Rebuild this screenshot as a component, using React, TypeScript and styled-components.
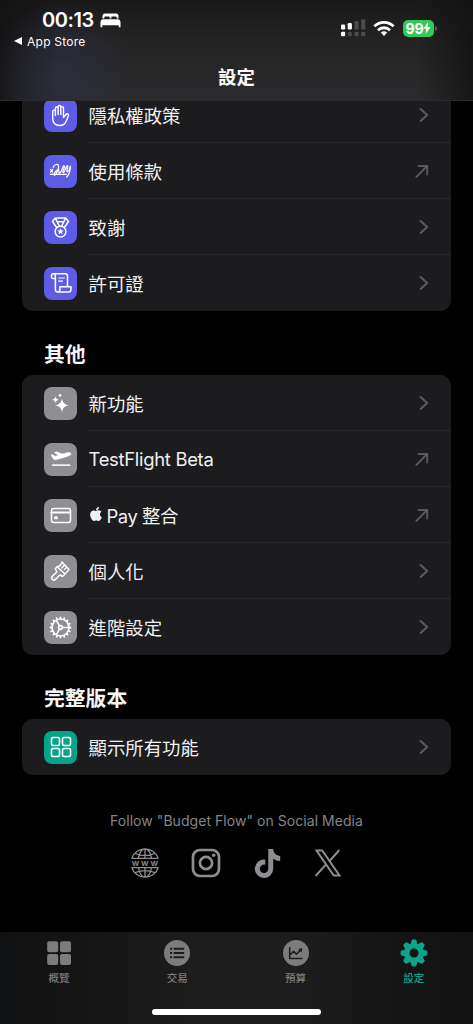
import React from "react";
import styled, { createGlobalStyle } from "styled-components";
import { FaApple, FaTiktok } from "react-icons/fa";

const GlobalStyle = createGlobalStyle`
  * { box-sizing: border-box; }
  body {
    margin: 0;
    background: #000;
    font-family: Inter, "Noto Sans CJK TC", sans-serif;
    color: #f0f0f1;
  }
  svg { display: block; flex: none; }
`;

const Screen = styled.div`
  display: flex;
  flex-direction: column;
  width: 473px;
  height: 1024px;
  overflow: hidden;
  background: #000;
`;

const Header = styled.header`
  display: flex;
  flex-direction: column;
  height: 101px;
  flex: none;
  border-bottom: 1px solid #29292b;
  background:
    radial-gradient(ellipse 70px 75px at 62px 75px, rgba(50, 50, 82, 0.5), rgba(50, 50, 82, 0)),
    linear-gradient(90deg, rgba(16, 16, 17, 0.75) 0, rgba(16, 16, 17, 0) 60px, rgba(16, 16, 17, 0) 415px, rgba(16, 16, 17, 0.75) 473px),
    linear-gradient(180deg, #191919 0, #232324 40px, #2b2b2d 100px);
`;

const StatusBar = styled.div`
  display: flex;
  justify-content: space-between;
  height: 54px;
  padding: 8px 36px 0 14px;
`;

const Clock = styled.div`
  display: flex;
  align-items: center;
  gap: 6px;
  height: 24px;
  padding-left: 28px;
  font-size: 20px;
  font-weight: 600;
  letter-spacing: -0.4px;
  color: #fff;
`;

const BackLink = styled.div`
  display: flex;
  align-items: center;
  gap: 4px;
  height: 18px;
  font-size: 12px;
  letter-spacing: 0.25px;
  color: #fff;
`;

const Indicators = styled.div`
  display: flex;
  align-items: center;
  height: 40px;
`;

const Wifi = styled.svg`
  margin: 0 8px 0 7px;
`;

const Battery = styled.div`
  display: flex;
  align-items: center;
  justify-content: center;
  width: 31px;
  height: 17px;
  border-radius: 5px;
  background: #34c759;
  color: #fff;
  font-size: 14px;
  font-weight: 700;
  letter-spacing: -0.2px;
`;

const BatteryCap = styled.span`
  width: 2px;
  height: 5px;
  margin-left: 1px;
  border-radius: 0 2px 2px 0;
  background: #58585a;
`;

const Title = styled.h1`
  margin: 9px 0 0;
  text-align: center;
  font-size: 18.4px;
  line-height: 28px;
  font-weight: 600;
  color: #fff;
`;

const Content = styled.main`
  flex: 1;
  min-height: 0;
  overflow: hidden;
  padding: 0 22px;
`;

const Card = styled.section<{ $scrolled?: boolean }>`
  margin-top: ${(p) => (p.$scrolled ? "-14px" : "0")};
  border-radius: 11px;
  overflow: hidden;
  background: #1c1c1e;
`;

const Row = styled.div`
  display: flex;
  align-items: center;
  height: 56px;
  padding-left: 22px;
`;

const Tile = styled.div<{ $color: string }>`
  display: flex;
  align-items: center;
  justify-content: center;
  flex: none;
  width: 33px;
  height: 33px;
  border-radius: 8px;
  background: ${(p) => p.$color};
  color: #fff;
`;

const RowBody = styled.div<{ $line: boolean }>`
  display: flex;
  align-items: center;
  justify-content: space-between;
  flex: 1;
  height: 56px;
  margin-left: 11px;
  padding: 1px 21px 0 0.5px;
  border-bottom: 1px solid ${(p) => (p.$line ? "#29292b" : "transparent")};
  font-size: 18.4px;
`;

const Label = styled.span<{ $tracking?: number }>`
  display: flex;
  align-items: center;
  gap: 3px;
  white-space: pre;
  letter-spacing: ${(p) => p.$tracking ?? 0}px;
`;

const AppleMark = styled(FaApple)`
  margin: -2px 0 0 -1px;
`;

const SectionTitle = styled.h2`
  display: flex;
  align-items: center;
  height: 64px;
  margin: 0;
  padding: 23px 0 0 22px;
  font-size: 20.8px;
  line-height: 26px;
  font-weight: 600;
  color: #f6f6f7;
`;

const Follow = styled.p`
  margin: 35px 0 0;
  text-align: center;
  font-size: 14px;
  line-height: 22px;
  letter-spacing: 0.05px;
  color: #858589;
`;

const Socials = styled.div`
  display: flex;
  justify-content: center;
  gap: 31px;
  margin-top: 16px;
  color: #8e8e92;
`;

const SocialLink = styled.span`
  display: flex;
  align-items: center;
  justify-content: center;
  width: 30px;
  height: 30px;
`;

const BottomBar = styled.footer`
  height: 92px;
  flex: none;
  background: linear-gradient(90deg, #101112 0, #151515 100px, #1d1d1d 190px, #1d1d1d 300px, #151515 380px, #121212 473px);
`;

const Tabs = styled.nav`
  display: grid;
  grid-template-columns: repeat(4, 1fr);
  height: 77px;
  padding-top: 7px;
`;

const Tab = styled.div<{ $active?: boolean }>`
  display: flex;
  flex-direction: column;
  align-items: center;
  gap: 4px;
  font-size: 10.6px;
  line-height: 16px;
  font-weight: 500;
  color: ${(p) => (p.$active ? "#0ba58a" : "#7c7c7d")};
`;

const TabIcon = styled.span`
  display: flex;
  align-items: center;
  height: 28px;
`;

const HomeIndicator = styled.div`
  width: 169px;
  height: 6px;
  margin: 0 auto;
  border-radius: 3px;
  background: #fff;
`;

type StrokeProps = { w: number; h: number; sw?: number; children: React.ReactNode };
const Line = ({ w, h, sw = 1.5, children }: StrokeProps) => (
  <svg width={w} height={h} viewBox={`0 0 ${w} ${h}`} fill="none" stroke="currentColor" strokeWidth={sw} strokeLinecap="round" strokeLinejoin="round">
    {children}
  </svg>
);

const HandIcon = () => (
  <Line w={19} h={23} sw={1.4}>
    <path d="M1.700 14V7.500a1.350 1.350 0 0 1 2.700 0V11.500V4.400a1.350 1.350 0 0 1 2.700 0V10.500V2.800a1.350 1.350 0 0 1 2.700 0V10.500V4a1.350 1.350 0 0 1 2.700 0V13.600L15 10.500c.9-1.300 3-.6 2.500 1L15.300 17c-1.200 3-3.400 4.500-6.300 4.500C4.500 21.500 1.700 18.600 1.700 14Z" />
  </Line>
);

const SignatureIcon = () => (
  <Line w={23} h={18} sw={1.25}>
    <path d="M1.500 7.500l2.200 2.500M3.700 7.500L1.500 10M1.300 12.400h16" />
    <path d="M4.200 5.300C5.500 2.200 9 1.500 9.600 3.700C10.200 6.500 7 13.500 5.500 13.200C4.200 12.600 7 8.300 9 7.700C10.600 7.300 9.300 11.600 10.600 11.200C12.200 10.600 13.300 6.600 14 5C14.700 3 15.900 3.600 15.200 5.800C14.600 8 13.300 10.400 14.200 10.700C15.500 10.900 16.400 7 17.500 4.600C18.300 2.800 19.400 3.700 18.600 6C17.800 8.500 17.200 9.500 18 9.800C19.600 9.600 20.800 7 21.400 4.200C21.700 8 20 13 17.500 15.200" />
  </Line>
);

const MedalIcon = () => (
  <Line w={19} h={23} sw={1.5}>
    <path d="M4.300 2H14.700L17.500 5.500L13.700 11M4.300 2L1.500 5.500L5.300 11M4.300 2L8.200 9.800M14.700 2L10.800 9.800M6.300 5.800H12.700" />
    <circle cx="9.500" cy="15.600" r="5.400" />
    <path d="M9.500 12.200l.9 2.100 2.300.2-1.700 1.500.5 2.200-2-1.200-2 1.200.5-2.200-1.700-1.500 2.300-.2z" fill="currentColor" stroke="none" />
  </Line>
);

const ScrollIcon = () => (
  <Line w={22} h={22} sw={1.5}>
    <path d="M5 6.500H2.700C.9 6.500.9 1.800 3.300 1.800H15.200C16.900 1.800 17.500 2.700 17.500 4.200V14.600M3.300 1.800C5 1.800 5.400 2.800 5.400 4.400V17.500C5.400 19.300 6.300 20 7.700 20H18.600C20.200 20 21 19 21 17.200V14.700H9.900V17.600C9.900 19.200 9.200 20 7.700 20" />
    <path d="M8.700 6h5.700M8.700 9.200h3.800" strokeWidth="1.200" />
  </Line>
);

const SparklesIcon = () => (
  <svg width="19" height="22" viewBox="0 0 19 22" fill="currentColor">
    <path d="M11 6.500c.8 4.200 2.300 5.800 6.700 6.800-4.400 1-5.900 2.700-6.700 7-.8-4.300-2.300-6-6.700-7 4.400-1 5.900-2.600 6.700-6.800Z" />
    <path d="M4.500 4.200c.5 2.200 1.100 2.900 3.400 3.500C5.600 8.300 5 9 4.500 11.200 4 9 3.400 8.300 1.100 7.700 3.400 7.100 4 6.400 4.500 4.200ZM9 1c.4 1.500.8 2 2.400 2.300C9.800 3.700 9.400 4.200 9 5.700 8.600 4.200 8.200 3.700 6.600 3.300 8.200 3 8.600 2.500 9 1Z" />
  </svg>
);

const PlaneIcon = () => (
  <svg width="22" height="17" viewBox="0 0 22 17" fill="currentColor">
    <path d="M1 4L2.400 3.600L5.200 5.200L8.400 4.300L4.300 1.500L6.300.7L12.400 2.900L16.200 1.900C18.300 1.300 20.600 1.300 21 2.500C21.300 3.800 19.300 4.800 17.400 5.400L6.200 8.700C4.700 9.100 4 8.800 3.200 7.800Z" stroke="currentColor" strokeWidth=".5" strokeLinejoin="round" />
    <rect x="1.800" y="13.200" width="18.600" height="1.900" rx=".9" opacity=".88" />
  </svg>
);

const CardIcon = () => (
  <Line w={22} h={17} sw={1.5}>
    <rect x="1.500" y="1.500" width="19" height="14" rx="2.200" />
    <path d="M1.500 5.500h19" strokeWidth="2" />
    <rect x="4.200" y="9.300" width="3.600" height="3" rx=".6" fill="currentColor" stroke="none" />
  </Line>
);

const BrushIcon = () => (
  <Line w={21} h={22} sw={1.5}>
    <path d="M12 2L19 9.600L15 14L7 6.800C9.500 6.600 11.300 4.600 12 2ZM14 5.500L11.800 8M16.500 7.500L14.700 9.300M7 6.800L5.500 8.500C5 9.400 5.600 10 6.400 10.700C7.100 11.400 7 12 6 12.800L2.300 16.200C.2 18.400 3.300 21.500 5.500 19.400L9 15.700C9.700 14.800 10.300 14.800 11.200 15.600C12 16.400 12.500 16.500 13.300 15.800L15 14" />
    <circle cx="4" cy="17.800" r=".6" fill="currentColor" stroke="none" />
  </Line>
);

const teeth = Array.from({ length: 16 }, (_, i) => i * 22.5);
const GearOutlineIcon = () => (
  <Line w={23} h={23} sw={1.6}>
    <circle cx="11.500" cy="11.500" r="8.500" />
    {teeth.map((a) => (
      <path key={a} d="M11.500 2.600V1.500" transform={`rotate(${a} 11.500 11.500)`} strokeWidth="1.900" />
    ))}
    <circle cx="11.500" cy="11.500" r="1.900" />
    <path d="M13.400 11.500H19.600M10.500 9.800L7.400 4.500M10.500 13.200L7.400 18.500" />
  </Line>
);

const GridOutlineIcon = () => (
  <Line w={22} h={22} sw={1.6}>
    {[[1.5, 1.5], [12.5, 1.5], [1.5, 12.5], [12.5, 12.5]].map(([x, y]) => (
      <rect key={`${x}-${y}`} x={x} y={y} width="8" height="8" rx="1.400" />
    ))}
  </Line>
);

const Chevron = () => (
  <Line w={12} h={16} sw={2}>
    <path d="M2.600 2L9.200 8L2.600 14" stroke="#5b5b5f" />
  </Line>
);

const ArrowOut = () => (
  <Line w={15} h={15} sw={1.9}>
    <path d="M1.400 12.800L11.800 2.400M3.600 2H12.200V10.600" stroke="#5b5b5f" />
  </Line>
);

const GlobeIcon = () => (
  <svg width="30" height="30" viewBox="0 0 30 30" fill="none" stroke="currentColor" strokeWidth="1.300">
    <path d="M1.700 10.500A14 14 0 0 1 28.300 10.500M1.700 19.500A14 14 0 0 0 28.300 19.500M15 1V10.500M15 19.500V29M8.400 10.500C9.500 4.500 12 1 15 1S20.500 4.500 21.600 10.500M8.400 19.500C9.500 25.500 12 29 15 29S20.500 25.500 21.600 19.500M1.700 10.300H28.300M1.700 19.700H28.300M5 5.200C10 8 20 8 25 5.200M5 24.800C10 22 20 22 25 24.800" />
    <text x="15.800" y="17.700" textAnchor="middle" fontFamily="Inter, sans-serif" fontSize="9" fontWeight="600" letterSpacing="1.800" fill="currentColor" stroke="none">www</text>
  </svg>
);

const InstagramIcon = () => (
  <svg width="30" height="30" viewBox="0 0 30 30" fill="none" stroke="currentColor" strokeWidth="2.700">
    <rect x="2" y="2" width="26" height="26" rx="7" />
    <circle cx="15" cy="15" r="6.100" />
    <circle cx="22.700" cy="7.300" r="1.800" fill="currentColor" stroke="none" />
  </svg>
);

const XIcon = () => (
  <svg width="28" height="28" viewBox="0 0 28 28" fill="none" stroke="currentColor" strokeWidth="2">
    <path d="M2.500 1.500H8.200L25.500 26.500H19.800ZM1.500 27L12.300 15.100M15.300 12.300L25.300 1" />
  </svg>
);

const BedIcon = () => (
  <svg width="21" height="15" viewBox="0 0 21 15" fill="#fff">
    <path d="M2.500 5.500V3Q2.500.5 5 .5H16Q18.500.5 18.500 3V5.500H16.700V4.500Q16.700 3.500 15.600 3.500H12.300Q11.300 3.500 11.300 4.500V5.500H9.700V4.500Q9.700 3.500 8.700 3.500H5.400Q4.300 3.500 4.300 4.500V5.500Z" />
    <path d="M3 6.200H18Q20.500 6.400 20.500 9V14.200H18.700V12.300H2.300V14.200H.5V9Q.5 6.400 3 6.200Z" />
  </svg>
);

const SignalIcon = () => (
  <svg width="25" height="18" viewBox="0 0 25 18">
    {[0, 1, 2, 3].map((i) => (
      <g key={i} fill={i < 2 ? "#fff" : "#4b4b4c"}>
        <rect x={i * 6.7} y={[5.5, 4, 2, 0.3][i]} width="4.200" height={[5, 6.5, 8.5, 10.2][i]} rx="1.200" />
        <rect x={i * 6.7} y="12.700" width="4.200" height="4.600" rx="1.200" fill={i < 1 ? "#fff" : "#4b4b4c"} />
      </g>
    ))}
  </svg>
);

const OverviewIcon = () => (
  <svg width="26" height="26" viewBox="0 0 26 26" fill="currentColor">
    {[[1.2, 1.2], [14, 1.2], [1.2, 14], [14, 14]].map(([x, y]) => (
      <rect key={`${x}-${y}`} x={x} y={y} width="11" height="11" rx="2" />
    ))}
  </svg>
);

const ListIcon = () => (
  <svg width="26" height="26" viewBox="0 0 26 26" stroke="#1c1c1c" strokeWidth="1.900">
    <circle cx="13" cy="13" r="13" fill="currentColor" stroke="none" />
    <path d="M6 8.700H8.100M9.600 8.700H20.200M6 13H8.100M9.600 13H20.200M6 17.300H8.100M9.600 17.300H20.200" />
  </svg>
);

const ChartIcon = () => (
  <svg width="26" height="26" viewBox="0 0 26 26" fill="none" stroke="#1c1c1c" strokeWidth="1.500" strokeLinejoin="round">
    <circle cx="13" cy="13" r="13" fill="currentColor" stroke="none" />
    <path d="M6.700 7V18.500H19.500M7.300 14.800L10.700 11.200L13.300 14.200L18 9.600" />
    <path d="M15.200 9L19.300 8.300L18.600 12.500Z" fill="#1c1c1c" stroke="none" />
  </svg>
);

const GearIcon = () => (
  <svg width="28" height="28" viewBox="0 0 28 28" fill="currentColor">
    {[0, 45, 90, 135, 180, 225, 270, 315].map((a) => (
      <path key={a} d="M10.300 6.200L11.500 1.700Q11.800.6 12.900.6H15.100Q16.200.6 16.500 1.700L17.700 6.200Z" transform={`rotate(${a} 14 14)`} />
    ))}
    <path fillRule="evenodd" d="M14 4.200A9.800 9.800 0 1 0 14 23.800A9.800 9.800 0 1 0 14 4.200ZM14 9.500A4.500 4.500 0 1 1 14 18.500A4.500 4.500 0 1 1 14 9.500Z" />
  </svg>
);

type Item = { label: React.ReactNode; icon: React.ReactNode; external?: boolean; tracking?: number };

const about: Item[] = [
  { label: "隱私權政策", icon: <HandIcon /> },
  { label: "使用條款", icon: <SignatureIcon />, external: true },
  { label: "致謝", icon: <MedalIcon /> },
  { label: "許可證", icon: <ScrollIcon /> },
];

const other: Item[] = [
  { label: "新功能", icon: <SparklesIcon /> },
  { label: "TestFlight Beta", icon: <PlaneIcon />, external: true, tracking: -0.28 },
  { label: <><AppleMark size={16} />Pay 整合</>, icon: <CardIcon />, external: true, tracking: -0.45 },
  { label: "個人化", icon: <BrushIcon /> },
  { label: "進階設定", icon: <GearOutlineIcon /> },
];

const full: Item[] = [{ label: "顯示所有功能", icon: <GridOutlineIcon /> }];

const Group = ({ items, color, scrolled }: { items: Item[]; color: string; scrolled?: boolean }) => (
  <Card $scrolled={scrolled}>
    {items.map((item, i) => (
      <Row key={i}>
        <Tile $color={color}>{item.icon}</Tile>
        <RowBody $line={i < items.length - 1}>
          <Label $tracking={item.tracking}>{item.label}</Label>
          {item.external ? <ArrowOut /> : <Chevron />}
        </RowBody>
      </Row>
    ))}
  </Card>
);

export default function App() {
  return (
    <Screen>
      <GlobalStyle />
      <Header>
        <StatusBar>
          <div>
            <Clock>00:13 <BedIcon /></Clock>
            <BackLink>
              <svg width="9" height="8" viewBox="0 0 9 8"><path d="M0 4L8 0V8Z" fill="#fff" /></svg>
              App Store
            </BackLink>
          </div>
          <Indicators>
            <SignalIcon />
            <Wifi width="22" height="17" viewBox="0 0 22 17" fill="none" stroke="#fff" strokeWidth="2.900">
              <path d="M1.400 6.300C6.800 1 15.200 1 20.600 6.300M5 10.200C8.500 7 13.500 7 17 10.200" />
              <path d="M7.800 12.600Q11 10 14.200 12.600L11 16Z" fill="#fff" stroke="none" />
            </Wifi>
            <Battery>
              99
              <svg width="8" height="12" viewBox="0 0 8 12"><path d="M5.200 0L.3 6.700H3.400L2.500 12L7.700 5H4.500Z" fill="#fff" /></svg>
            </Battery>
            <BatteryCap />
          </Indicators>
        </StatusBar>
        <Title>設定</Title>
      </Header>
      <Content>
        <Group items={about} color="#5e5ce6" scrolled />
        <SectionTitle>其他</SectionTitle>
        <Group items={other} color="#8e8e93" />
        <SectionTitle>完整版本</SectionTitle>
        <Group items={full} color="#05a388" />
        <Follow>Follow "Budget Flow" on Social Media</Follow>
        <Socials>
          <SocialLink><GlobeIcon /></SocialLink>
          <SocialLink><InstagramIcon /></SocialLink>
          <SocialLink><FaTiktok size={29} /></SocialLink>
          <SocialLink><XIcon /></SocialLink>
        </Socials>
      </Content>
      <BottomBar>
        <Tabs>
          <Tab><TabIcon><OverviewIcon /></TabIcon>概覽</Tab>
          <Tab><TabIcon><ListIcon /></TabIcon>交易</Tab>
          <Tab><TabIcon><ChartIcon /></TabIcon>預算</Tab>
          <Tab $active><TabIcon><GearIcon /></TabIcon>設定</Tab>
        </Tabs>
        <HomeIndicator />
      </BottomBar>
    </Screen>
  );
}
